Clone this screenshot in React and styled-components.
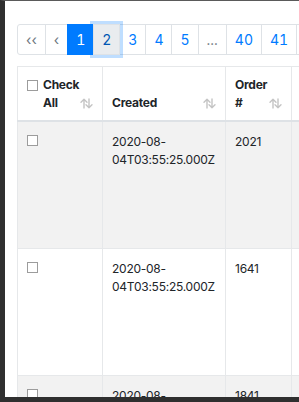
import React from 'react';
import styled, { createGlobalStyle } from 'styled-components';

const GlobalStyle = createGlobalStyle`
  html, body {
    margin: 0;
    padding: 0;
    background: #ffffff;
    font-family: Inter, "Liberation Sans", Arial, sans-serif;
    color: #212529;
  }
`;

const Frame = styled.div`
  box-sizing: border-box;
  width: 299px;
  height: 402px;
  overflow: hidden;
  background: #fff;
  border-left: 5px solid #2f2f2f;
  border-top: 1px solid #5a5a5a;
  border-bottom: 5px solid #2f2f2f;
  padding: 23px 0 0 12px;
`;

const Pager = styled.ul`
  display: flex;
  list-style: none;
  margin: 0 0 11px;
  padding: 0;
  font-size: 14px;
  line-height: 21px;
  white-space: nowrap;
  font-variant-numeric: tabular-nums;
`;

const PageItem = styled.li`
  flex: none;
  box-sizing: border-box;
  padding: 4px 8px;
  margin-left: -1px;
  border: 1px solid #dee2e6;
  color: ${(p) => (p.$active ? '#fff' : p.$muted ? '#6c757d' : '#007bff')};
  background: ${(p) => (p.$active ? '#007bff' : p.$focus ? '#e9ecef' : '#fff')};
  border-color: ${(p) => (p.$active ? '#007bff' : '#dee2e6')};
  position: relative;
  z-index: ${(p) => (p.$focus ? 2 : p.$active ? 1 : 0)};
  box-shadow: ${(p) => (p.$focus ? '0 0 0 3px rgba(0, 123, 255, 0.25)' : 'none')};
  ${(p) => (p.$focus ? 'color: #0056b3;' : '')}

  &:first-child {
    margin-left: 0;
    border-radius: 3px 0 0 3px;
  }
`;

const Table = styled.table`
  border-collapse: collapse;
  table-layout: fixed;
  width: 400px;
  font-size: 12px;
  line-height: 18px;
  letter-spacing: -0.25px;
`;

const HeadCell = styled.th`
  box-sizing: border-box;
  width: ${(p) => p.$w}px;
  border: 1px solid #e6e8ea;
  border-bottom: 2px solid #dee2e6;
  padding: 9px 9px 8px;
  text-align: left;
  vertical-align: bottom;
  font-weight: 700;
`;

const HeadInner = styled.div`
  display: flex;
  align-items: flex-end;
  justify-content: space-between;
`;

const HeadLabel = styled.div`
  display: flex;
  align-items: flex-start;
  gap: 5px;
`;

const Row = styled.tr`
  height: 127px;
  background: ${(p) => (p.$striped ? '#f2f2f2' : '#fff')};
`;

const Cell = styled.td`
  border: 1px solid #e6e8ea;
  padding: 11px 9px;
  vertical-align: top;
  word-break: break-word;
`;

const Box = styled.span`
  display: inline-block;
  box-sizing: border-box;
  width: 11px;
  height: 11px;
  border: 1px solid #9c9c9c;
  background: #fff;
  margin-top: ${(p) => p.$top ?? 1}px;
`;

const SortIcon = () => (
  <svg width="13" height="11" viewBox="0 0 13 11" style={{ marginBottom: 3, flex: 'none' }}>
    <g fill="none" stroke="#c4c4c4" strokeWidth="1.4" strokeLinecap="round" strokeLinejoin="round">
      <path d="M4 10V1.2M1 4.2L4 1.2L7 4.2" />
      <path d="M9 1v8.8M6 6.8L9 9.8L12 6.8" />
    </g>
  </svg>
);

const rows = [
  { created: '2020-08-04T03:55:25.000Z', order: '2021' },
  { created: '2020-08-04T03:55:25.000Z', order: '1641' },
  { created: '2020-08-04T03:55:25.000Z', order: '1841' },
];

export default function App() {
  return (
    <>
      <GlobalStyle />
      <Frame>
        <Pager>
          <PageItem $muted>‹‹</PageItem>
          <PageItem $muted>‹</PageItem>
          <PageItem $active>1</PageItem>
          <PageItem $focus>2</PageItem>
          <PageItem>3</PageItem>
          <PageItem>4</PageItem>
          <PageItem>5</PageItem>
          <PageItem $muted>...</PageItem>
          <PageItem>40</PageItem>
          <PageItem>41</PageItem>
          <PageItem>›</PageItem>
        </Pager>
        <Table>
          <thead>
            <tr>
              <HeadCell $w={85}>
                <HeadInner>
                  <HeadLabel>
                    <Box $top={4} />
                    <span>
                      Check
                      <br />
                      All
                    </span>
                  </HeadLabel>
                  <SortIcon />
                </HeadInner>
              </HeadCell>
              <HeadCell $w={123}>
                <HeadInner>
                  <span>Created</span>
                  <SortIcon />
                </HeadInner>
              </HeadCell>
              <HeadCell $w={66}>
                <HeadInner>
                  <span>
                    Order
                    <br />#
                  </span>
                  <SortIcon />
                </HeadInner>
              </HeadCell>
              <HeadCell $w={126}>
                <HeadInner>
                  <span>Status</span>
                  <SortIcon />
                </HeadInner>
              </HeadCell>
            </tr>
          </thead>
          <tbody>
            {rows.map((r, i) => (
              <Row key={i} $striped={i % 2 === 0}>
                <Cell>
                  <Box />
                </Cell>
                <Cell>{r.created}</Cell>
                <Cell>{r.order}</Cell>
                <Cell />
              </Row>
            ))}
          </tbody>
        </Table>
      </Frame>
    </>
  );
}
